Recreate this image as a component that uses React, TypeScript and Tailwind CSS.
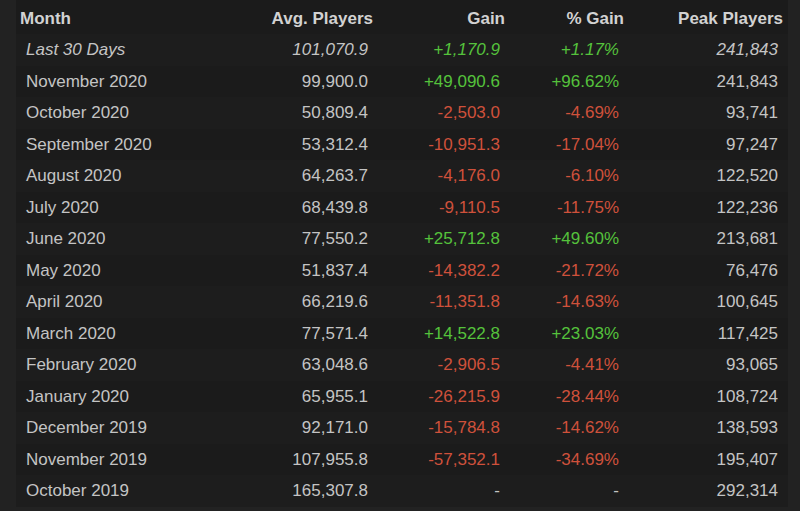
const rows: [string, string, string, string, string][] = [
  ['November 2020', '99,900.0', '+49,090.6', '+96.62%', '241,843'],
  ['October 2020', '50,809.4', '-2,503.0', '-4.69%', '93,741'],
  ['September 2020', '53,312.4', '-10,951.3', '-17.04%', '97,247'],
  ['August 2020', '64,263.7', '-4,176.0', '-6.10%', '122,520'],
  ['July 2020', '68,439.8', '-9,110.5', '-11.75%', '122,236'],
  ['June 2020', '77,550.2', '+25,712.8', '+49.60%', '213,681'],
  ['May 2020', '51,837.4', '-14,382.2', '-21.72%', '76,476'],
  ['April 2020', '66,219.6', '-11,351.8', '-14.63%', '100,645'],
  ['March 2020', '77,571.4', '+14,522.8', '+23.03%', '117,425'],
  ['February 2020', '63,048.6', '-2,906.5', '-4.41%', '93,065'],
  ['January 2020', '65,955.1', '-26,215.9', '-28.44%', '108,724'],
  ['December 2019', '92,171.0', '-15,784.8', '-14.62%', '138,593'],
  ['November 2019', '107,955.8', '-57,352.1', '-34.69%', '195,407'],
  ['October 2019', '165,307.8', '-', '-', '292,314'],
];

const cols = 'grid grid-cols-[234px_128px_132px_119px_159px]';

function gainColor(v: string) {
  if (v.startsWith('+')) return 'text-[#55c23c]';
  if (v.length > 1 && v.startsWith('-')) return 'text-[#cf513b]';
  return 'text-[#c4c4c4]';
}

export default function App() {
  return (
    <div
      className="w-[800px] h-[511px] overflow-hidden bg-[#222222] text-[17px] text-[#c4c4c4]"
      style={{ fontFamily: '"Liberation Sans", Arial, sans-serif' }}
    >
      <div className="ml-4 w-[772px] bg-[#1b1b1b]">
        {/* header */}
        <div className={`${cols} h-[34px] pt-[4px] items-center font-bold text-[#d2d2d2]`}>
          <div className="pl-1">Month</div>
          <div className="text-right pr-[5px]">Avg. Players</div>
          <div className="text-right pr-[5px]">Gain</div>
          <div className="text-right pr-[5px]">% Gain</div>
          <div className="text-right pr-[5px]">Peak Players</div>
        </div>

        {/* last 30 days */}
        <div className={`${cols} h-[31.5px] items-center italic bg-[#1d1d1d]`}>
          <div className="pl-[10px]">Last 30 Days</div>
          <div className="text-right pr-[10px]">101,070.9</div>
          <div className="text-right pr-[10px] text-[#55c23c]">+1,170.9</div>
          <div className="text-right pr-[10px] text-[#55c23c]">+1.17%</div>
          <div className="text-right pr-[10px]">241,843</div>
        </div>

        {rows.map((r, i) => (
          <div
            key={r[0]}
            className={`${cols} h-[31.5px] items-center ${i % 2 === 0 ? 'bg-[#1b1b1b]' : 'bg-[#1d1d1d]'}`}
          >
            <div className="pl-[10px]">{r[0]}</div>
            <div className="text-right pr-[10px]">{r[1]}</div>
            <div className={`text-right pr-[10px] ${gainColor(r[2])}`}>{r[2]}</div>
            <div className={`text-right pr-[10px] ${gainColor(r[3])}`}>{r[3]}</div>
            <div className="text-right pr-[10px]">{r[4]}</div>
          </div>
        ))}
      </div>
    </div>
  );
}
